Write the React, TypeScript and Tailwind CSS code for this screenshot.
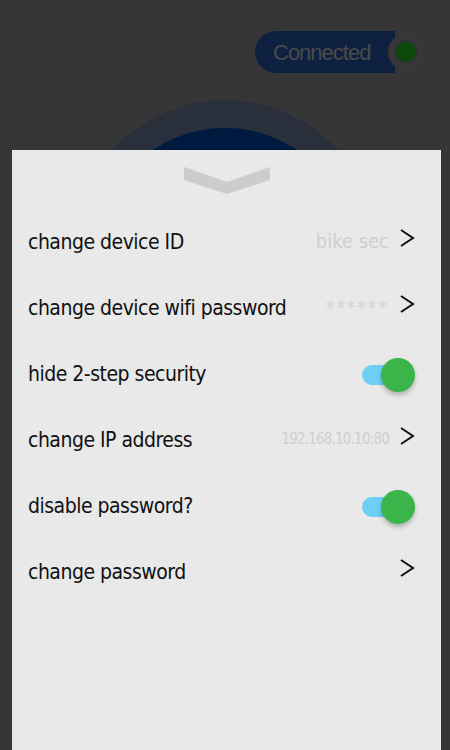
import React from "react";

const labelFont = { fontFamily: '"DejaVu Sans", sans-serif' };

function Chevron() {
  return (
    <svg width="16" height="20" viewBox="0 0 16 20" className="-mt-[10px] shrink-0">
      <polyline points="2,2 14,10 2,18" fill="none" stroke="#111" strokeWidth="2" />
    </svg>
  );
}

function Toggle() {
  return (
    <div className="relative w-[53px] h-[34px] shrink-0">
      <div className="absolute left-0 top-[7px] w-[36px] h-[20px] rounded-full bg-[#6dcff6]" />
      <div className="absolute right-0 top-0 w-[34px] h-[34px] rounded-full bg-[#3bb54a] shadow-[0_3px_5px_rgba(0,0,0,0.25)]" />
    </div>
  );
}

type Row = { label: string; value?: string; valueClass?: string; kind: "link" | "toggle" };

const rows: Row[] = [
  { label: "change device ID", value: "bike sec", valueClass: "text-[20px]", kind: "link" },
  { label: "change device wifi password", value: "******", valueClass: "text-[19px] tracking-[2px] text-[#d3d3d3]", kind: "link" },
  { label: "hide 2-step security", kind: "toggle" },
  { label: "change IP address", value: "192.168.10.10:80", valueClass: "text-[15px] tracking-[-0.8px]", kind: "link" },
  { label: "disable password?", kind: "toggle" },
  { label: "change password", kind: "link" },
];

export default function App() {
  return (
    <div className="w-[450px] h-[750px] bg-[#363636] overflow-hidden flex flex-col">
      {/* dimmed page behind the sheet */}
      <div className="h-[150px] shrink-0 overflow-hidden flex flex-col">
        <div className="flex justify-end items-center pt-[31px] pr-[26px]">
          <div
            className="w-[140px] h-[42px] rounded-l-full bg-[#0f2140] text-[#4a4a4a] text-[22px] tracking-[-1px] pl-[18px] flex items-center"
            style={{ fontFamily: '"Liberation Sans", sans-serif' }}
          >
            Connected
          </div>
          <div className="-ml-[7px] w-[36px] h-[36px] rounded-full bg-[#373737] flex items-center justify-center">
            <div className="w-[20px] h-[20px] rounded-full bg-[#0b4a0b] shadow-[0_0_3px_rgba(0,0,0,0.4)]" />
          </div>
        </div>
        <div className="flex justify-center mt-[27px]">
          <div className="w-[306px] h-[306px] shrink-0 rounded-full bg-[#2a303b] flex justify-center pt-[28px]">
            <div className="w-[260px] h-[260px] rounded-full bg-[#001a3f]" />
          </div>
        </div>
      </div>

      {/* settings sheet */}
      <div className="ml-[12px] mr-[9px] flex-1 bg-[#e9e9e9] flex flex-col font-stretch-condensed" style={labelFont}>
        <div className="flex justify-center pt-[17px] h-[60px]">
          <svg width="86" height="27" viewBox="0 0 86 27">
            <polygon points="0,0 43,15 86,0 86,13 43,27 0,13" fill="#cccccc" />
          </svg>
        </div>
        {rows.map((r) => (
          <div key={r.label} className="h-[66px] flex items-center pl-[16px] pr-[26px]">
            <span className="text-[21px] text-[#111] flex-1 whitespace-nowrap tracking-[-0.5px]">{r.label}</span>
            {r.kind === "link" ? (
              <div className="flex items-center gap-[10px]">
                {r.value && <span className={`text-[#cfcfcf] ${r.valueClass} -mt-[4px]`}>{r.value}</span>}
                <Chevron />
              </div>
            ) : (
              <Toggle />
            )}
          </div>
        ))}
      </div>
    </div>
  );
}
